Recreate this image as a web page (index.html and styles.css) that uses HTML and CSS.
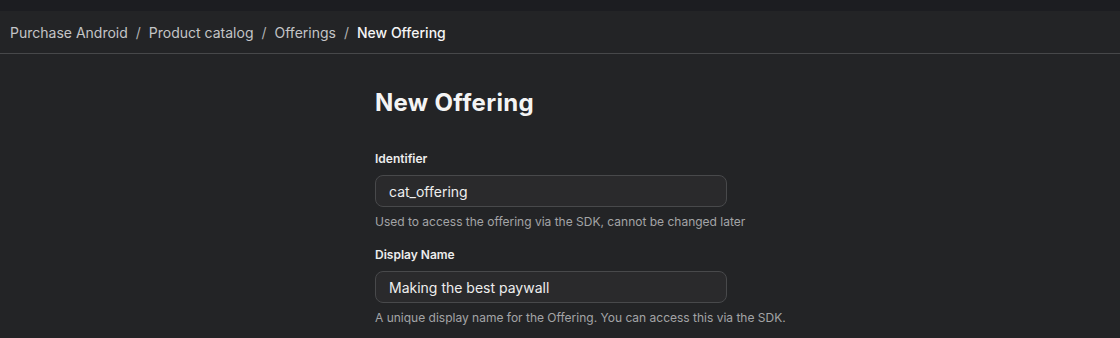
FILE: index.html
```html
<!DOCTYPE html>
<html>
<head>
<meta charset="utf-8">
<link rel="stylesheet" href="styles.css">
</head>
<body>
<div class="topband"></div>
<header class="crumbs">
  <span class="crumb">Purchase Android</span><span class="sep">/</span>
  <span class="crumb">Product catalog</span><span class="sep">/</span>
  <span class="crumb">Offerings</span><span class="sep">/</span>
  <span class="crumb current">New Offering</span>
</header>
<main class="content">
  <h1 class="title">New Offering</h1>
  <div class="field">
    <label class="label">Identifier</label>
    <div class="input">cat_offering</div>
    <p class="help">Used to access the offering via the SDK, cannot be changed later</p>
  </div>
  <div class="field">
    <label class="label">Display Name</label>
    <div class="input">Making the best paywall</div>
    <p class="help">A unique display name for the Offering. You can access this via the SDK.</p>
  </div>
</main>
</body>
</html>
```
FILE: styles.css
```css
html, body { margin: 0; padding: 0; }
body {
  background: #232426;
  font-family: Inter, "Noto Sans", sans-serif;
  color: #e6e6e6;
  width: 1120px;
  height: 338px;
  overflow: hidden;
}
.topband { height: 11px; background: #1c1d21; }
.crumbs {
  height: 43px;
  box-sizing: border-box;
  border-bottom: 1px solid #47484a;
  display: flex;
  align-items: center;
  padding: 0 10px;
  font-size: 14px;
  color: #c4c5c7;
}
.sep { margin: 0 8px; color: #b0b1b3; }
.crumb.current { color: #f5f5f5; font-weight: 500; }
.content {
  width: 352px;
  margin-left: 375px;
  padding-top: 34px;
}
.title {
  margin: 0 0 33px 0;
  font-size: 24px;
  font-weight: 700;
  color: #f4f4f4;
  line-height: 30px;
  letter-spacing: 0.3px;
}
.field { margin-bottom: 17px; }
.label {
  display: block;
  font-size: 12px;
  font-weight: 600;
  color: #ededed;
  line-height: 16px;
  margin-bottom: 8px;
}
.input {
  height: 32px;
  box-sizing: border-box;
  border: 1px solid #48494b;
  border-radius: 8px;
  background: #2a2a2c;
  padding: 0 13px;
  display: flex;
  align-items: center;
  font-size: 14px;
  color: #eeeeee;
}
.help {
  margin: 7px 0 0 0;
  font-size: 12px;
  line-height: 16px;
  color: #a3a4a6;
  white-space: nowrap;
}
```
